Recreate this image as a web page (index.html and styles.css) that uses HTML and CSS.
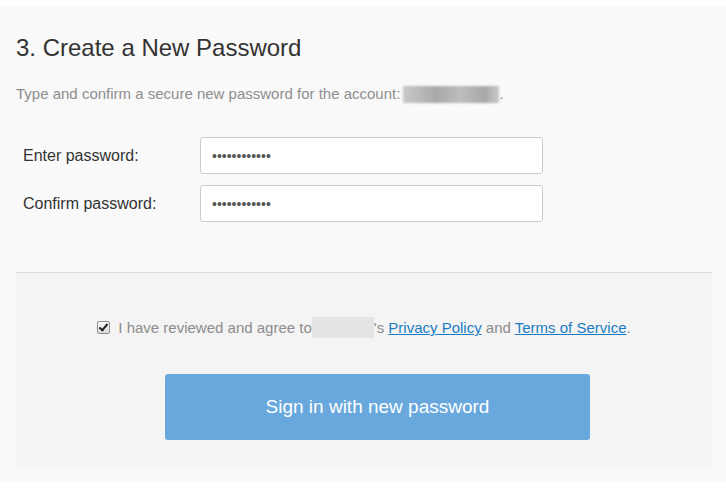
FILE: index.html
```html
<!DOCTYPE html>
<html>
<head>
<meta charset="utf-8">
<link rel="stylesheet" href="styles.css">
</head>
<body>
<div class="panel">
  <div class="main">
    <h1 class="title">3. Create a New Password</h1>
    <p class="desc">Type and confirm a secure new password for the account: <span class="blur-account"></span>.</p>
    <div class="form">
      <div class="row">
        <label class="label" for="p1">Enter password:</label>
        <input class="input" id="p1" type="password" value="************">
      </div>
      <div class="row">
        <label class="label" for="p2">Confirm password:</label>
        <input class="input" id="p2" type="password" value="************">
      </div>
    </div>
  </div>
  <div class="footer">
    <div class="agree">
      <input class="check" type="checkbox" checked>
      <span class="agree-text">I have reviewed and agree to<span class="blur-name"></span>'s <a class="link" href="#">Privacy Policy</a> and <a class="link" href="#">Terms of Service</a>.</span>
    </div>
    <button class="btn" type="button">Sign in with new password</button>
  </div>
</div>
</body>
</html>
```
FILE: styles.css
```css
html, body {
  margin: 0;
  padding: 0;
  background: #ffffff;
  font-family: "Liberation Sans", Arial, sans-serif;
}
.panel {
  margin-top: 7px;
  background: #f9f9f9;
  padding: 0 14px 15px 16px;
  height: 475px;
  box-sizing: border-box;
}
.main {
  padding-top: 27px;
}
.title {
  margin: 0;
  font-size: 24px;
  line-height: 28px;
  font-weight: normal;
  color: #333333;
}
.desc {
  margin: 22px 0 0 0;
  font-size: 15px;
  line-height: 20px;
  color: #8e8e8e;
  display: flex;
  align-items: center;
}
.blur-account {
  display: inline-block;
  width: 96px;
  height: 17px;
  margin-left: 3px;
  background: linear-gradient(90deg, #c9c9c9, #a9a9a9 35%, #bdbdbd 60%, #a8a8a8 85%, #c8c8c8);
  filter: blur(1px);
}
.form {
  margin-top: 33px;
  padding-left: 7px;
  display: flex;
  flex-direction: column;
  gap: 11px;
}
.row {
  display: flex;
  align-items: center;
}
.label {
  width: 177px;
  font-size: 16px;
  color: #333333;
}
.input {
  width: 343px;
  height: 37px;
  box-sizing: border-box;
  border: 1px solid #cccccc;
  border-radius: 3px;
  background: #ffffff;
  padding: 0 11px;
  font-family: "Liberation Sans", Arial, sans-serif;
  font-size: 14px;
  color: #555555;
  outline: none;
}
.footer {
  margin-top: 50px;
  border-top: 1px solid #dddddd;
  background: #f4f4f4;
  height: 195px;
  box-sizing: border-box;
  padding-top: 44px;
  display: flex;
  flex-direction: column;
}
.agree {
  display: flex;
  align-items: center;
  justify-content: center;
  font-size: 15px;
  line-height: 20px;
  color: #8c8c8c;
}
.check {
  appearance: none;
  -webkit-appearance: none;
  position: relative;
  margin: 0 8px 0 0;
  width: 13px;
  height: 13px;
  box-sizing: border-box;
  border: 1px solid #8f8f8f;
  border-radius: 2px;
  background: linear-gradient(#fafafa, #dcdcdc);
}
.check::after {
  content: "";
  position: absolute;
  left: 3px;
  top: 0px;
  width: 3px;
  height: 7px;
  border-right: 2px solid #222222;
  border-bottom: 2px solid #222222;
  transform: rotate(40deg);
}
.blur-name {
  display: inline-block;
  width: 62px;
  height: 21px;
  vertical-align: -5px;
  background: #e4e4e4;
}
.link {
  color: #1a7cc4;
  text-decoration: underline;
}
.btn {
  margin-top: 36px;
  margin-left: 149px;
  align-self: flex-start;
  width: 425px;
  height: 66px;
  border: none;
  border-radius: 3px;
  background: #68a8dd;
  color: #ffffff;
  font-family: "Liberation Sans", Arial, sans-serif;
  font-size: 19px;
}
```
